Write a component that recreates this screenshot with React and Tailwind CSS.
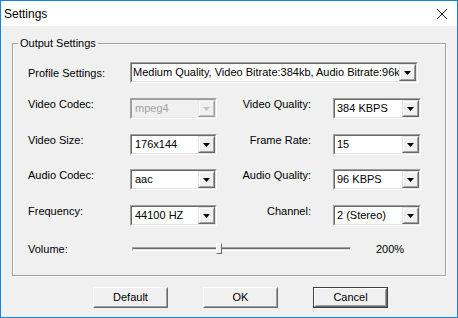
const sunkenOuter = "border border-t-[#a0a0a0] border-l-[#a0a0a0] border-r-white border-b-white";
const sunkenInner = "border border-t-[#696969] border-l-[#696969] border-r-[#e3e3e3] border-b-[#e3e3e3]";

function Arrow({ disabled }) {
  return (
    <div className="w-[17px] h-full border border-t-[#e3e3e3] border-l-[#e3e3e3] border-r-[#696969] border-b-[#696969] bg-[#f0f0f0]">
      <div className="w-full h-full border border-t-white border-l-white border-r-[#a0a0a0] border-b-[#a0a0a0] flex items-center justify-center">
        <svg width="7" height="4" viewBox="0 0 7 4">
          <polygon points="0,0 7,0 3.5,4" fill={disabled ? "#a0a0a0" : "#000"} />
        </svg>
      </div>
    </div>
  );
}

function Combo({ value, width, pad = "pl-[3px]", disabled }) {
  return (
    <div className={`${width} h-[21px] ${sunkenOuter}`}>
      <div className={`w-full h-full ${sunkenInner} flex ${disabled ? "bg-[#f0f0f0] opacity-60" : "bg-white"}`}>
        <div className={`flex-1 flex items-center overflow-hidden whitespace-nowrap ${pad} ${disabled ? "text-[#6d6d6d]" : "text-black"}`}>
          {value}
        </div>
        <Arrow disabled={disabled} />
      </div>
    </div>
  );
}

function Row({ left, leftValue, leftDisabled, right, rightValue, className }) {
  return (
    <div className={`flex items-start ${className}`}>
      <div className="w-[102px] leading-[13px]">{left}</div>
      <Combo value={leftValue} width="w-[87px]" disabled={leftDisabled} />
      <div className="w-[94px] text-right leading-[13px]">{right}</div>
      <div className="ml-[22px]">
        <Combo value={rightValue} width="w-[88px]" pad="pl-[2px]" />
      </div>
    </div>
  );
}

function Button({ label, isDefault }) {
  return (
    <div className={`w-[75px] h-[21px] ${isDefault ? "border border-[#404040]" : ""}`}>
      <div className="w-full h-full border border-t-white border-l-white border-r-[#696969] border-b-[#696969] bg-[#f0f0f0]">
        <div className="w-full h-full border border-t-[#f0f0f0] border-l-[#f0f0f0] border-r-[#a0a0a0] border-b-[#a0a0a0] flex items-center justify-center">
          {label}
        </div>
      </div>
    </div>
  );
}

export default function App() {
  return (
    <div className="w-[458px] h-[318px] border border-[#1883d7] bg-[#f0f0f0] flex flex-col font-['Liberation_Sans',Arial,sans-serif] text-[11px] text-black overflow-hidden">
      {/* title bar */}
      <div className="h-[25px] bg-white flex items-center justify-between shrink-0">
        <span className="pl-[3px] text-[12px]">Settings</span>
        <svg width="10" height="10" viewBox="0 0 10 10" className="mr-[10px]">
          <path d="M0 0 L10 10 M10 0 L0 10" stroke="#111" strokeWidth="1" />
        </svg>
      </div>

      <div className="flex flex-col pl-[11px]">
        <fieldset className="mt-[11px] w-[434px] h-[239px] border border-[#a0a0a0] shadow-[1px_1px_0_#fff,inset_1px_1px_0_#fff]">
          <legend className="ml-[5px] px-[2px] leading-[13px]">Output Settings</legend>
          <div className="flex flex-col pl-[15px] pt-[12px]">
            <div className="flex items-center">
              <div className="w-[102px] leading-[13px] pt-[2px]">Profile Settings:</div>
              <Combo
                value="Medium Quality, Video Bitrate:384kb, Audio Bitrate:96kbps"
                width="w-[288px]"
                pad="pl-[1px]"
              />
            </div>
            <Row className="mt-[15px]" left="Video Codec:" leftValue="mpeg4" leftDisabled right="Video Quality:" rightValue="384 KBPS" />
            <Row className="mt-[15px]" left="Video Size:" leftValue="176x144" right="Frame Rate:" rightValue="15" />
            <Row className="mt-[14px]" left="Audio Codec:" leftValue="aac" right="Audio Quality:" rightValue="96 KBPS" />
            <Row className="mt-[15px]" left="Frequency:" leftValue="44100 HZ" right="Channel:" rightValue="2 (Stereo)" />

            <div className="mt-[13px] h-[20px] flex items-center">
              <div className="w-[104px]">Volume:</div>
              <div className="relative w-[219px] h-[4px] border border-t-[#a0a0a0] border-l-[#a0a0a0] border-r-white border-b-white">
                <div className="w-full h-full border-t border-[#696969] bg-[#e3e3e3]" />
                <div className="absolute left-[83px] top-[-5px] w-[6px] h-[11px] border border-t-white border-l-white border-r-[#696969] border-b-[#696969] bg-[#f0f0f0]" />
              </div>
              <div className="ml-[25px]">200%</div>
            </div>
          </div>
        </fieldset>

        <div className="mt-[11px] pl-[81px] flex gap-[35px]">
          <Button label="Default" />
          <Button label="OK" />
          <Button label="Cancel" isDefault />
        </div>
      </div>
    </div>
  );
}
